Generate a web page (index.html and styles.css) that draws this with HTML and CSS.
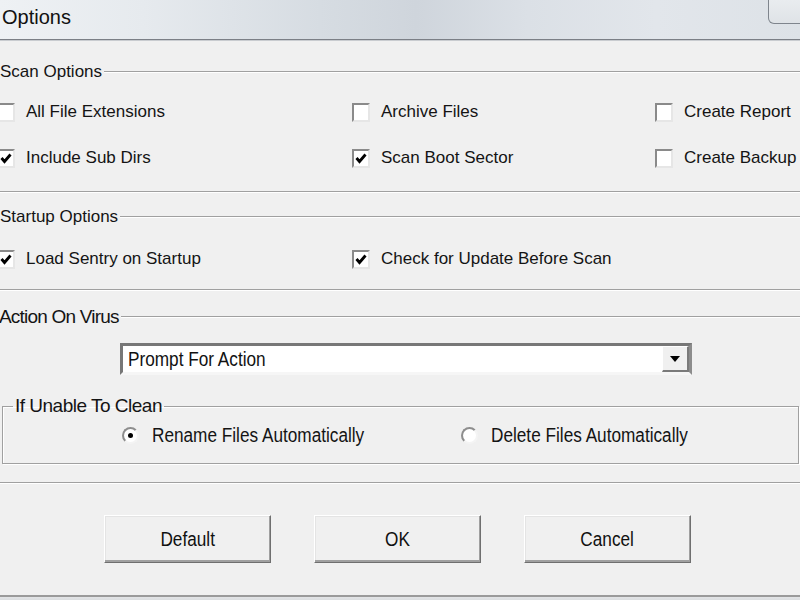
FILE: index.html
```html
<!DOCTYPE html>
<html>
<head>
<meta charset="utf-8">
<title>Options</title>
<link rel="stylesheet" href="styles.css">
</head>
<body>
<div class="window">
  <div class="titlebar">
    <span class="title">Options</span>
    <span class="close"></span>
  </div>

  <div class="group-head head-scan"><span class="glabel">Scan Options</span><span class="gline"></span></div>
  <div class="checkrow row-a">
    <label class="chk"><span class="box"></span><span class="txt">All File Extensions</span></label>
    <label class="chk"><span class="box"></span><span class="txt">Archive Files</span></label>
    <label class="chk"><span class="box"></span><span class="txt">Create Report</span></label>
  </div>
  <div class="checkrow row-b">
    <label class="chk"><span class="box"><svg viewBox="0 0 14 15"><polyline points="2.5,7 5.5,10.5 11.5,3.5"/></svg></span><span class="txt">Include Sub Dirs</span></label>
    <label class="chk"><span class="box"><svg viewBox="0 0 14 15"><polyline points="2.5,7 5.5,10.5 11.5,3.5"/></svg></span><span class="txt">Scan Boot Sector</span></label>
    <label class="chk"><span class="box"></span><span class="txt">Create Backup</span></label>
  </div>
  <div class="sep sep-1"></div>

  <div class="group-head head-startup"><span class="glabel">Startup Options</span><span class="gline"></span></div>
  <div class="checkrow row-c">
    <label class="chk"><span class="box"><svg viewBox="0 0 14 15"><polyline points="2.5,7 5.5,10.5 11.5,3.5"/></svg></span><span class="txt">Load Sentry on Startup</span></label>
    <label class="chk"><span class="box"><svg viewBox="0 0 14 15"><polyline points="2.5,7 5.5,10.5 11.5,3.5"/></svg></span><span class="txt">Check for Update Before Scan</span></label>
  </div>
  <div class="sep sep-2"></div>

  <div class="group-head head-action"><span class="glabel cond">Action On Virus</span><span class="gline"></span></div>
  <div class="combo">
    <span class="combo-text narrow">Prompt For Action</span>
    <span class="combo-btn"><span class="arrow"></span></span>
  </div>

  <fieldset class="unable">
    <legend class="cond legend-unable">If Unable To Clean</legend>
    <div class="radiorow">
      <label class="rad"><span class="circle on"><span class="dot"></span></span><span class="narrow">Rename Files Automatically</span></label>
      <label class="rad"><span class="circle"></span><span class="narrow">Delete Files Automatically</span></label>
    </div>
  </fieldset>
  <div class="sep sep-3"></div>

  <div class="buttons">
    <button class="btn"><span class="narrow center">Default</span></button>
    <button class="btn"><span class="narrow center">OK</span></button>
    <button class="btn"><span class="narrow center">Cancel</span></button>
  </div>

  <div class="bottom-edge"></div>
</div>
</body>
</html>
```

FILE: styles.css
```css
html, body {
  margin: 0;
  padding: 0;
}
body {
  width: 800px;
  height: 600px;
  overflow: hidden;
  background: #f0f0f0;
  font-family: "Liberation Sans", Arial, sans-serif;
  color: #141414;
}
.window {
  display: flex;
  flex-direction: column;
  height: 600px;
}

/* title bar */
.titlebar {
  flex-shrink: 0;
  height: 39px;
  border-bottom: 1px solid #7b7f86;
  box-shadow: 0 1px 0 #c9ccd0;
  background: linear-gradient(90deg, #eef1f4 0%, #e6eaee 18%, #d6dce2 40%, #cfd5dc 52%, #dbe0e6 66%, #e2e6eb 82%, #dde2e7 100%);
  display: flex;
  justify-content: space-between;
  align-items: flex-start;
}
.title {
  font-size: 20px;
  line-height: 20px;
  margin: 7px 0 0 2px;
  color: #111;
}
.close {
  width: 34px;
  height: 24px;
  box-sizing: border-box;
  margin-right: -2px;
  border: 1px solid #7f858d;
  border-top: none;
  border-radius: 0 0 0 6px;
  background: linear-gradient(#e9ecef, #dfe3e7);
}

/* group headers */
.group-head {
  display: flex;
  align-items: flex-start;
  height: 20px;
  flex-shrink: 0;
}
.glabel {
  font-size: 17px;
  line-height: 20px;
  white-space: nowrap;
}
.gline {
  flex: 1;
  margin: 9px 0 0 2px;
  border-top: 1px solid #a0a0a0;
  border-bottom: 1px solid #ffffff;
}
.head-scan { margin-top: 22px; }
.head-startup { margin-top: 14px; }
.head-action { margin-top: 16px; }
.head-action .glabel { margin-left: -1px; }

.cond {
  font-size: 19px;
  letter-spacing: -0.8px;
}
.narrow {
  display: inline-block;
  font-size: 20px;
  line-height: 22px;
  white-space: nowrap;
  transform: scaleX(0.86);
  transform-origin: left center;
}
.narrow.center {
  transform-origin: center center;
}

/* checkbox rows */
.checkrow {
  display: grid;
  grid-template-columns: 355px 303px auto;
  height: 28px;
  margin-left: -3px;
  flex-shrink: 0;
}
.row-a { margin-top: 16px; }
.row-b { margin-top: 18px; }
.row-c { margin-top: 18px; }
.chk {
  display: flex;
  align-items: center;
  gap: 11px;
  white-space: nowrap;
}
.txt {
  font-size: 17px;
  line-height: 20px;
}
.box {
  width: 18px;
  height: 19px;
  box-sizing: border-box;
  border: 2px solid;
  border-color: #8a8a8a #e6e6e6 #e6e6e6 #8a8a8a;
  background: #ffffff;
  display: flex;
}
.box svg {
  width: 14px;
  height: 15px;
}
.box polyline {
  fill: none;
  stroke: #000;
  stroke-width: 2.8;
}

/* separators (bottoms of group boxes) */
.sep {
  flex-shrink: 0;
  border-top: 1px solid #a0a0a0;
  border-bottom: 1px solid #ffffff;
}
.sep-1 { margin-top: 19px; }
.sep-2 { margin-top: 16px; }
.sep-3 { margin-top: 18px; }

/* combo box */
.combo {
  flex-shrink: 0;
  margin: 16px 0 0 120px;
  width: 572px;
  height: 32px;
  box-sizing: border-box;
  border: 3px solid;
  border-color: #777777 #8c8c8c #f6f6f6 #777777;
  background: #ffffff;
  display: flex;
  align-items: center;
  justify-content: space-between;
}
.combo-text {
  margin-left: 5px;
  color: #111;
}
.combo-btn {
  width: 27px;
  height: 26px;
  box-sizing: border-box;
  background: #f0f0f0;
  border-top: 1px solid #ffffff;
  border-left: 1px solid #ffffff;
  border-right: 2px solid #7a7a7a;
  border-bottom: 2px solid #7a7a7a;
  display: flex;
  align-items: center;
  justify-content: center;
}
.arrow {
  width: 0;
  height: 0;
  border-left: 5px solid transparent;
  border-right: 5px solid transparent;
  border-top: 6px solid #000;
}

/* if unable to clean */
.unable {
  flex-shrink: 0;
  margin: 21px 0 0 2px;
  width: 797px;
  box-sizing: border-box;
  padding: 5px 0 14px 0;
  border: 1px solid #a0a0a0;
  box-shadow: inset 1px 1px 0 #ffffff, 1px 1px 0 #ffffff;
  min-inline-size: 0;
}
.legend-unable {
  margin-left: 10px;
  padding: 0 2px;
  line-height: 20px;
  letter-spacing: -0.5px;
}
.radiorow {
  display: grid;
  grid-template-columns: 339px auto;
  height: 28px;
  margin-left: 119px;
}
.rad {
  display: flex;
  align-items: center;
  gap: 13px;
  white-space: nowrap;
}
.circle {
  width: 17px;
  height: 17px;
  box-sizing: border-box;
  border-radius: 50%;
  border: 2px solid;
  border-color: #8d8d8d #f4f4f4 #f4f4f4 #8d8d8d;
  background: #ffffff;
  display: flex;
  align-items: center;
  justify-content: center;
}
.dot {
  width: 5px;
  height: 5px;
  border-radius: 50%;
  background: #000;
}

/* buttons */
.buttons {
  flex-shrink: 0;
  display: flex;
  gap: 43px;
  margin: 31px 0 0 104px;
}
.btn {
  width: 167px;
  height: 48px;
  box-sizing: border-box;
  background: #f0f0f0;
  border: 1px solid;
  border-color: #ffffff #6f6f6f #6f6f6f #ffffff;
  box-shadow: inset -1px -2px 0 #a0a0a0, inset 1px 1px 0 #e4e4e4;
  font-family: "Liberation Sans", Arial, sans-serif;
  color: #111;
  padding: 0;
  display: flex;
  align-items: center;
  justify-content: center;
}

.bottom-edge {
  flex-shrink: 0;
  margin-top: 32px;
  height: 6px;
  border-top: 2px solid #9a9a9a;
  background: linear-gradient(#e2e4e6, #d4d7da);
}
```
